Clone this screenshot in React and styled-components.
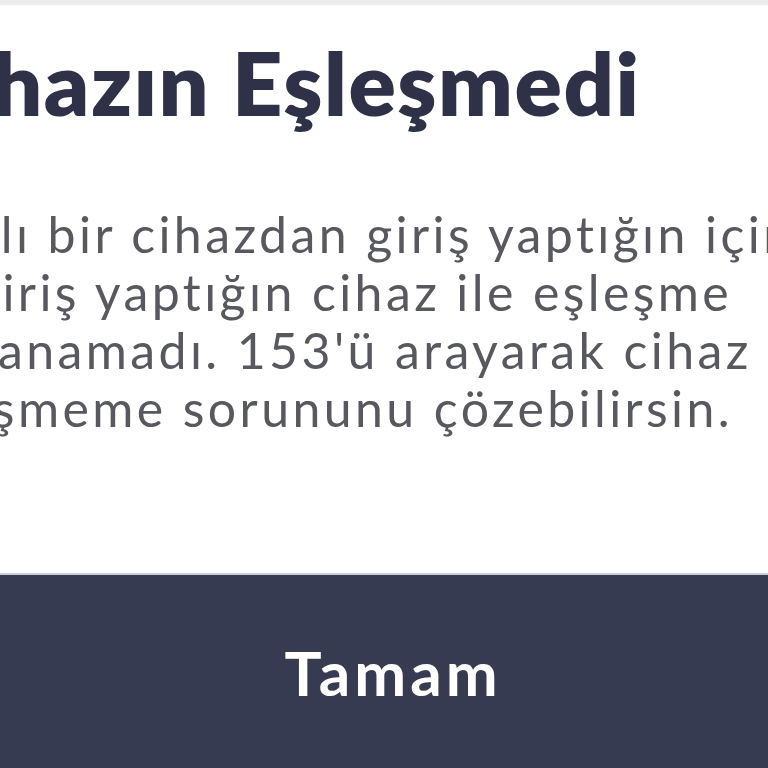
import React from 'react';
import styled, { createGlobalStyle } from 'styled-components';

const Global = createGlobalStyle`
  html, body {
    margin: 0;
    padding: 0;
    background: #ffffff;
    overflow: hidden;
  }
  body {
    font-family: Lato, "Noto Sans", sans-serif;
  }
`;

const Page = styled.div`
  display: flex;
  flex-direction: column;
  width: 768px;
  height: 768px;
  overflow: hidden;
`;

const TopStrip = styled.div`
  height: 5px;
  background: #ececef;
  flex-shrink: 0;
`;

const Card = styled.div`
  flex: 1;
  display: flex;
  flex-direction: column;
  background: #ffffff;
  padding-top: 22px;
  overflow: hidden;
`;

const Title = styled.h1`
  margin: 0 0 0 ${p => -p.$cut}px;
  font-size: 88px;
  line-height: 110px;
  font-weight: 800;
  letter-spacing: 1.5px;
  color: #2f3148;
  white-space: nowrap;
`;

const Body = styled.div`
  margin-top: 68px;
  display: flex;
  flex-direction: column;
`;

const Line = styled.div`
  margin-left: ${p => -p.$cut}px;
  font-size: 50px;
  line-height: 58px;
  letter-spacing: 3.4px;
  color: #58595f;
  white-space: nowrap;
`;

const Button = styled.button`
  height: 195px;
  flex-shrink: 0;
  border: none;
  border-top: 2px solid #c9cbd6;
  background: #373b51;
  color: #ffffff;
  font-family: Lato, "Noto Sans", sans-serif;
  font-size: 62px;
  font-weight: 700;
  letter-spacing: 4px;
  padding: 0 0 0 18px;
  cursor: pointer;
`;

const lines = [
  { text: 'Farklı bir cihazdan giriş yaptığın için', cut: 106 },
  { text: 'giriş yaptığın cihaz ile eşleşme', cut: 27 },
  { text: "sağlanamadı. 153'ü arayarak cihaz", cut: 100 },
  { text: 'eşleşmeme sorununu çözebilirsin.', cut: 107 },
];

export default function App() {
  return (
    <Page>
      <Global />
      <TopStrip />
      <Card>
        <Title $cut={92}>Cihazın Eşleşmedi</Title>
        <Body>
          {lines.map((l, i) => (
            <Line key={i} $cut={l.cut}>{l.text}</Line>
          ))}
        </Body>
      </Card>
      <Button>Tamam</Button>
    </Page>
  );
}
